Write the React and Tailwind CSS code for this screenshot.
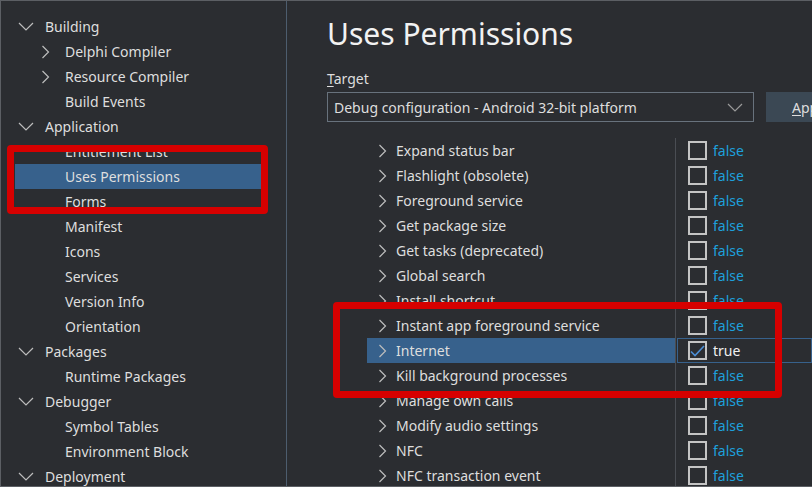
import React from "react";

const font = { fontFamily: '"Noto Sans", "Open Sans", sans-serif' };

const ChevronDown = () => (
  <svg width="16" height="9" viewBox="0 0 16 9" className="shrink-0">
    <path d="M1 1l7 7 7-7" fill="none" stroke="#bdbdbd" strokeWidth="1.2" />
  </svg>
);

const ChevronRight = () => (
  <svg width="9" height="14" viewBox="0 0 9 14" className="shrink-0">
    <path d="M1.5 1l6 6-6 6" fill="none" stroke="#bdbdbd" strokeWidth="1.2" />
  </svg>
);

const tree = [
  { label: "Building", level: 0, open: true },
  { label: "Delphi Compiler", level: 1, arrow: true },
  { label: "Resource Compiler", level: 1, arrow: true },
  { label: "Build Events", level: 1 },
  { label: "Application", level: 0, open: true },
  { label: "Entitlement List", level: 1 },
  { label: "Uses Permissions", level: 1, selected: true },
  { label: "Forms", level: 1 },
  { label: "Manifest", level: 1 },
  { label: "Icons", level: 1 },
  { label: "Services", level: 1 },
  { label: "Version Info", level: 1 },
  { label: "Orientation", level: 1 },
  { label: "Packages", level: 0, open: true },
  { label: "Runtime Packages", level: 1 },
  { label: "Debugger", level: 0, open: true },
  { label: "Symbol Tables", level: 1 },
  { label: "Environment Block", level: 1 },
  { label: "Deployment", level: 0, open: true },
];

const permissions = [
  ["Expand status bar", false],
  ["Flashlight (obsolete)", false],
  ["Foreground service", false],
  ["Get package size", false],
  ["Get tasks (deprecated)", false],
  ["Global search", false],
  ["Install shortcut", false],
  ["Instant app foreground service", false],
  ["Internet", true],
  ["Kill background processes", false],
  ["Manage own calls", false],
  ["Modify audio settings", false],
  ["NFC", false],
  ["NFC transaction event", false],
];

const TreeRow = ({ item }) => (
  <div
    className={`h-[25px] flex items-center ${item.selected ? "bg-[#37618c]" : ""}`}
  >
    {item.level === 0 ? (
      <>
        <div className="w-[30px] pl-[3px] flex items-center">
          <ChevronDown />
        </div>
        <span>{item.label}</span>
      </>
    ) : (
      <>
        <div className="w-[50px] pl-[26px] flex items-center">
          {item.arrow && <ChevronRight />}
        </div>
        <span>{item.label}</span>
      </>
    )}
  </div>
);

const Checkbox = ({ checked }) => (
  <div className="w-[19px] h-[19px] border-2 border-[#c4c4c4] flex items-center justify-center shrink-0">
    {checked && (
      <svg width="15" height="12" viewBox="0 0 15 12">
        <path d="M1 6.5l4 4L14 1" fill="none" stroke="#4c8fd6" strokeWidth="1.6" />
      </svg>
    )}
  </div>
);

const PermissionRow = ({ name, value }) => (
  <div className="h-[25px] flex">
    <div
      className={`w-[308px] flex items-center pl-[11px] ${value ? "bg-[#37618c]" : ""}`}
    >
      <ChevronRight />
      <span className="ml-[9px]">{name}</span>
    </div>
    <div className="w-px bg-[#4a4d53]" />
    <div
      className={`flex-1 flex items-center ${value ? "border border-[#37618c] ml-px pl-[10px]" : "pl-[12px]"}`}
    >
      <Checkbox checked={value} />
      <span className={`ml-[6px] ${value ? "text-[#f0f0f0]" : "text-[#1ea0dc]"}`}>
        {value ? "true" : "false"}
      </span>
    </div>
  </div>
);

export default function App() {
  return (
    <div
      style={font}
      className="relative w-[812px] h-[487px] bg-[#2b2d31] text-[#dedede] text-[14px] border-t border-l border-b border-[#5c5f64] flex overflow-hidden"
    >
      {/* left tree */}
      <div className="w-[285px] pt-[13px] pl-[14px] shrink-0">
        <div className="w-[252px]">
          {tree.map((item) => (
            <TreeRow key={item.label} item={item} />
          ))}
        </div>
      </div>
      <div className="w-px bg-[#4d5d6e] shrink-0" />

      {/* main */}
      <div className="flex-1 pl-[40px] pt-[13px] overflow-hidden">
        <h1 className="h-[40px] leading-[40px] text-[30px] text-[#f2f2f2] whitespace-nowrap">
          Uses Permissions
        </h1>
        <div className="mt-[16px] h-[18px] leading-[18px]">
          <span className="underline underline-offset-2">T</span>arget
        </div>
        <div className="mt-[4px] flex gap-[12px]">
          <div className="w-[427px] h-[30px] border border-[#68727d] flex items-center justify-between pl-[6px] pr-[10px] shrink-0">
            <span>Debug configuration - Android 32-bit platform</span>
            <svg width="16" height="9" viewBox="0 0 16 9">
              <path d="M1 1l7 7 7-7" fill="none" stroke="#9a9a9a" strokeWidth="1.2" />
            </svg>
          </div>
          <div className="w-[80px] h-[30px] bg-[#3b4854] flex items-center pl-[26px] shrink-0 whitespace-nowrap">
            <span className="underline underline-offset-2">A</span>pply
          </div>
        </div>
        <div className="mt-[16px] ml-[40px]">
          {permissions.map(([name, value]) => (
            <PermissionRow key={name} name={name} value={value} />
          ))}
        </div>
      </div>

      {/* red annotation boxes */}
      <div className="absolute left-[6px] top-[144px] w-[261px] h-[69px] border-[7px] border-[#d60000] rounded-[4px] pointer-events-none" />
      <div className="absolute left-[332px] top-[301px] w-[449px] h-[96px] border-[7px] border-[#d60000] rounded-[4px] pointer-events-none" />
    </div>
  );
}
